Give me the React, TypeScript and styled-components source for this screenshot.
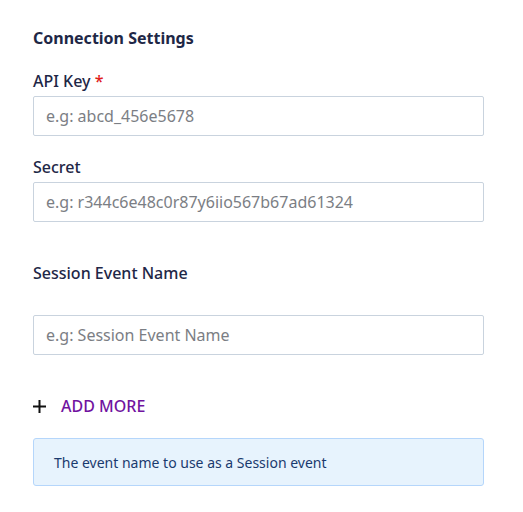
import { createGlobalStyle, styled } from "styled-components";

const GlobalStyle = createGlobalStyle`
  html, body {
    margin: 0;
    padding: 0;
    background: #ffffff;
    font-family: "Noto Sans", "Open Sans", sans-serif;
  }
`;

export default function App() {
  return (
    <Page>
      <GlobalStyle />
      <Heading>Connection Settings</Heading>

      <Field $top={21}>
        <Label>
          API Key <Required>*</Required>
        </Label>
        <Input placeholder="e.g: abcd_456e5678" />
      </Field>

      <Field $top={20}>
        <Label>Secret</Label>
        <Input placeholder="e.g: r344c6e48c0r87y6iio567b67ad61324" />
      </Field>

      <Field $top={40} $gap={31}>
        <Label>Session Event Name</Label>
        <Input placeholder="e.g: Session Event Name" />
      </Field>

      <AddMore>
        <svg width="13" height="13" viewBox="0 0 13 13">
          <path d="M6.5 0v13M0 6.5h13" stroke="#111" strokeWidth="2" />
        </svg>
        <span>ADD MORE</span>
      </AddMore>

      <InfoBox>The event name to use as a Session event</InfoBox>
    </Page>
  );
}

const Page = styled.div`
  padding: 27px 40px 20px 33px;
  width: 451px;
`;

const Heading = styled.h2`
  margin: 0;
  font-size: 16px;
  line-height: 22px;
  font-weight: 700;
  color: #1e2746;
`;

const Field = styled.div<{ $top: number; $gap?: number }>`
  display: flex;
  flex-direction: column;
  gap: ${(p) => p.$gap ?? 4}px;
  margin-top: ${(p) => p.$top}px;
`;

const Label = styled.label`
  font-size: 16px;
  line-height: 22px;
  font-weight: 500;
  color: #1e2746;
`;

const Required = styled.span`
  color: #e0201b;
`;

const Input = styled.input`
  box-sizing: border-box;
  width: 100%;
  height: 40px;
  padding: 0 12px;
  border: 1px solid #c9d3de;
  border-radius: 2px;
  font-family: "Noto Sans", sans-serif;
  font-size: 16px;
  color: #333;
  outline: none;

  &::placeholder {
    color: #7b7e84;
  }
`;

const AddMore = styled.button`
  display: flex;
  align-items: center;
  gap: 15px;
  margin-top: 40px;
  padding: 0;
  border: none;
  background: none;
  font-family: "Noto Sans", sans-serif;
  font-size: 16px;
  line-height: 22px;
  font-weight: 500;
  color: #7113a0;
  cursor: pointer;
`;

const InfoBox = styled.div`
  box-sizing: border-box;
  margin-top: 21px;
  height: 48px;
  display: flex;
  align-items: center;
  padding: 0 20px;
  background: #e7f3fd;
  border: 1px solid #b5d6fb;
  border-radius: 3px;
  font-size: 14px;
  color: #1a3a6e;
`;
